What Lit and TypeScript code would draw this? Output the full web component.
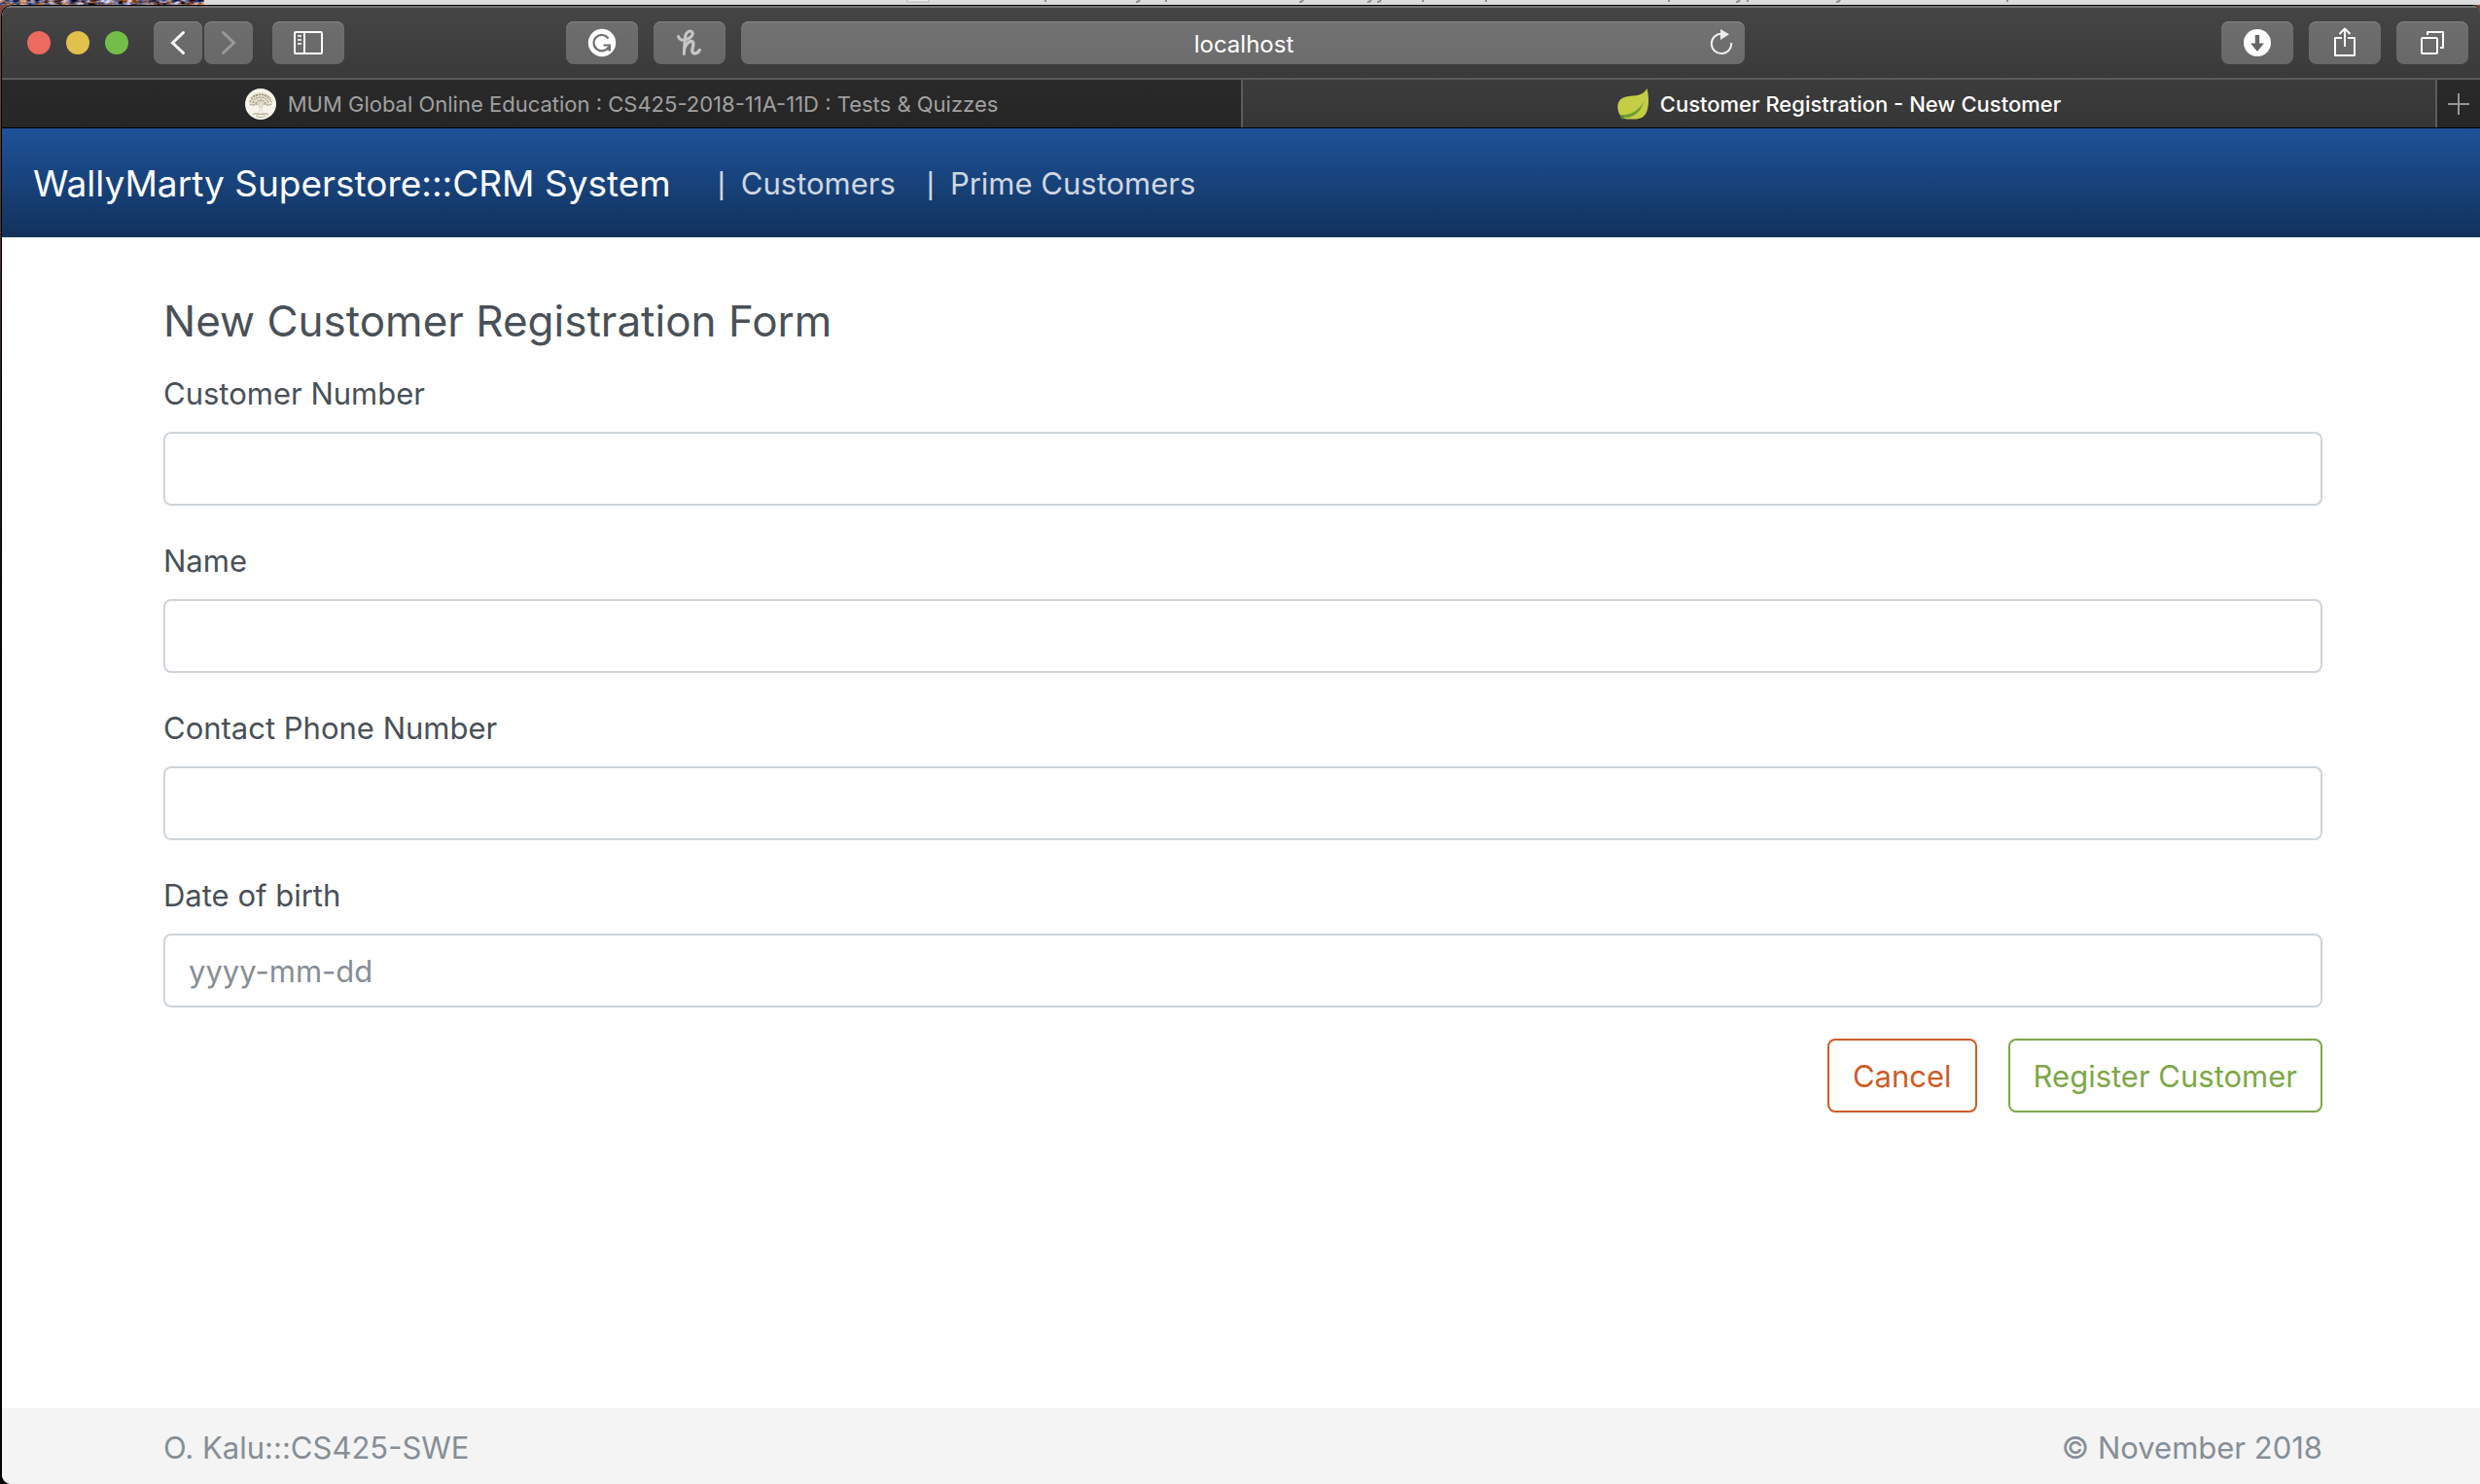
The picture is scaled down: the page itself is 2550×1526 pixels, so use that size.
import { LitElement, html, css, svg } from "lit";
import { customElement } from "lit/decorators.js";

interface Field {
  id: string;
  label: string;
  placeholder: string;
}

const FIELDS: Field[] = [
  { id: "customer-number", label: "Customer Number", placeholder: "" },
  { id: "name", label: "Name", placeholder: "" },
  { id: "phone", label: "Contact Phone Number", placeholder: "" },
  { id: "dob", label: "Date of birth", placeholder: "yyyy-mm-dd" },
];

/* Strip of the desktop that shows above the browser window. */
@customElement("desktop-strip")
export class DesktopStrip extends LitElement {
  static styles = css`
    :host {
      display: flex;
      height: 5px;
      overflow: hidden;
      background: linear-gradient(#dedede, #d6d6d6);
    }
    svg {
      display: block;
      flex: none;
    }
    .marks {
      margin-left: 720px;
    }
  `;

  render() {
    const tails = [144, 268, 532, 597, 785, 866, 1133];
    const hooks = [238, 406, 476, 486, 855, 958];
    return html`
      <svg width="210" height="5" aria-hidden="true">
        <filter id="grain" x="0" y="0" width="100%" height="100%" color-interpolation-filters="sRGB">
          <feTurbulence type="fractalNoise" baseFrequency="0.14 0.3" numOctaves="3" seed="4" />
          <feColorMatrix
            values="1.8 0 0 0 -0.42  1.3 0.7 0 0 -0.6  0.8 1.6 0 0 -0.76  0 0 0 0 1"
          />
        </filter>
        <rect width="210" height="5" filter="url(#grain)" />
      </svg>
      <svg class="marks" width="1200" height="5" aria-hidden="true">
        <path d="M3 0v2h22V0" fill="#eee" stroke="#b5b5b5" />
        ${tails.map((x) => svg`<rect x=${x} y="0" width="2" height="2" fill="#8c8c8c" />`)}
        ${hooks.map((x) => svg`<path d="M${x} 2q3 0 4-2" fill="none" stroke="#8c8c8c" stroke-width="2" />`)}
      </svg>
    `;
  }
}

@customElement("browser-toolbar")
export class BrowserToolbar extends LitElement {
  static styles = css`
    :host {
      display: grid;
      grid-template-columns: 1fr minmax(0, 1032px) 1fr;
      align-items: center;
      height: 76px;
      padding-left: 4px;
      border-top: 2px solid #737373;
      border-bottom: 2px solid #5a5a5a;
      background: linear-gradient(#454545, #3a3a3a);
    }
    .left,
    .right {
      display: flex;
      align-items: center;
    }
    .left {
      padding: 0 16px 0 22px;
    }
    .right {
      justify-content: flex-end;
      gap: 16px;
      padding-right: 12px;
    }
    .lights {
      display: flex;
      gap: 16px;
      margin-right: 26px;
    }
    .light {
      width: 24px;
      height: 24px;
      padding: 0;
      border: 0;
      border-radius: 50%;
    }
    .close {
      background: #ed6a5e;
    }
    .minimise {
      background: #e1c04c;
    }
    .zoom {
      background: #72be47;
    }
    .history {
      display: flex;
      gap: 2px;
      margin-right: 20px;
    }
    .extensions {
      display: flex;
      gap: 16px;
      margin-left: auto;
    }
    .tool {
      display: grid;
      place-items: center;
      width: 74px;
      height: 44px;
      padding: 0;
      border: 0;
      border-radius: 8px;
      color: #fff;
      background: linear-gradient(#6e6e6e, #686868);
      box-shadow: inset 0 1px 0 #868686;
    }
    .narrow {
      width: 50px;
    }
    .address {
      display: grid;
      grid-template-columns: 1fr auto;
      align-items: center;
      height: 44px;
      border-radius: 8px;
      background: linear-gradient(#727272, #6c6c6c);
      box-shadow: inset 0 1px 0 #8a8a8a;
    }
    .url {
      min-width: 0;
      height: 44px;
      margin-left: 48px;
      padding: 2px 0 0 2px;
      border: 0;
      outline: 0;
      background: none;
      color: #fff;
      font: 24px "Inter", "Liberation Sans", sans-serif;
      text-align: center;
      box-sizing: border-box;
    }
    .reload {
      display: grid;
      place-items: center;
      width: 48px;
      height: 44px;
      padding: 0;
      border: 0;
      background: none;
    }
    svg {
      display: block;
    }
  `;

  render() {
    return html`
      <div class="left">
        <div class="lights">
          <button class="light close" aria-label="Close"></button>
          <button class="light minimise" aria-label="Minimise"></button>
          <button class="light zoom" aria-label="Zoom"></button>
        </div>
        <div class="history">
          <button class="tool narrow" aria-label="Back">
            <svg width="50" height="44" fill="none" stroke="#fff" stroke-width="3" stroke-linecap="round">
              <path d="M30.500 11.500L19.500 22L30.500 32.500" />
            </svg>
          </button>
          <button class="tool narrow" aria-label="Forward">
            <svg width="50" height="44" fill="none" stroke="#999" stroke-width="3" stroke-linecap="round">
              <path d="M19.500 11.500L30.500 22L19.500 32.500" />
            </svg>
          </button>
        </div>
        <button class="tool" aria-label="Show sidebar">
          <svg width="74" height="44" fill="none" stroke="#fff" stroke-width="2">
            <rect x="23" y="11" width="28" height="22" rx="1" />
            <path d="M33 11v22" />
            <path d="M26 15h4M26 19h4M26 23h4" stroke="#ddd" />
          </svg>
        </button>
        <div class="extensions">
          <button class="tool" aria-label="Grammar checker">
            <svg width="74" height="44" fill="none">
              <circle cx="37" cy="22" r="14.200" fill="#fff" />
              <path d="M43.500 17.500A8.200 8.200 0 1 0 44 26" stroke="#707070" stroke-width="2.200" />
              <path d="M38.500 24.500h6.300v6" stroke="#707070" stroke-width="2.200" />
              <path d="M45.500 24.500l-5 5h5z" fill="#707070" />
            </svg>
          </button>
          <button class="tool" aria-label="Coupons">
            <svg width="74" height="44" fill="none" stroke="#c6c6c6" stroke-linecap="round" stroke-linejoin="round">
              <path
                d="M25.500 15.500C26 18.500 29 19.800 32.500 19C37.500 17.800 41 14.500 40 11.500C39 9 34.500 9.500 33 14C31.800 18 32 26 31.300 33.500"
                stroke-width="3"
              />
              <path
                d="M32 27C33.500 22.500 37 20 39.300 20.500C43 21.500 39.500 27 39.800 30.500C40 33.800 45 34 47.300 29.500"
                stroke-width="3.400"
              />
            </svg>
          </button>
        </div>
      </div>
      <div class="address">
        <input class="url" type="text" aria-label="Address" .value=${"localhost"} />
        <button class="reload" aria-label="Reload">
          <svg width="48" height="44" fill="none">
            <path d="M24 12.700A10.200 10.200 0 1 0 34.200 22" stroke="#eee" stroke-width="2" />
            <path d="M23 8l9 5.200l-9 5.800z" fill="#eee" />
          </svg>
        </button>
      </div>
      <div class="right">
        <button class="tool" aria-label="Downloads">
          <svg width="74" height="44">
            <circle cx="37" cy="22" r="14" fill="#fff" />
            <path d="M34.800 14h4.400v8.500h4.800L37 31l-7-8.500h4.800z" fill="#666" />
          </svg>
        </button>
        <button class="tool" aria-label="Share">
          <svg width="74" height="44" fill="none" stroke="#fff" stroke-width="2" stroke-linejoin="round">
            <path d="M34 17h-7v18h20v-18h-7" />
            <path d="M37 26V8M31.500 13L37 7.500L42.500 13" />
          </svg>
        </button>
        <button class="tool" aria-label="Show all tabs">
          <svg width="74" height="44" fill="none" stroke="#fff" stroke-width="2" stroke-linejoin="round">
            <rect x="26" y="17" width="16" height="16" rx="1" />
            <path d="M32 14v-3h16v16h-3" />
          </svg>
        </button>
      </div>
    `;
  }
}

@customElement("browser-tabs")
export class BrowserTabs extends LitElement {
  static styles = css`
    :host {
      display: grid;
      grid-template-columns: 1274fr 1228fr 46px;
      height: 50px;
      border-bottom: 1px solid #000;
      font: 22px "Inter", "Liberation Sans", sans-serif;
    }
    .tab {
      display: flex;
      align-items: center;
      justify-content: center;
      gap: 12px;
      min-width: 0;
      padding: 0;
      border: 0;
      font: inherit;
      color: #a0a0a0;
      background: linear-gradient(#2a2a2a, #252525);
      white-space: nowrap;
    }
    .active {
      border-left: 2px solid #5c5c5c;
      color: #fff;
      font-weight: 500;
      background: linear-gradient(#3c3c3c, #363636);
    }
    .add {
      border-left: 2px solid #5c5c5c;
    }
    svg {
      display: block;
      flex: none;
    }
  `;

  render() {
    return html`
      <button class="tab">
        <svg width="32" height="32" viewBox="0 0 32 32" fill="none">
          <circle cx="16" cy="16" r="16" fill="#f7f4ec" />
          <path
            d="M4 15C3 11 6 9 8 7C11 3 21 3 24 7C27 9 29 11 28 15C27 18 22 18 19 17L16 14L13 17C10 18 5 18 4 15Z"
            fill="#e4dfce"
          />
          <g stroke="#8f866c" stroke-dasharray="2 1">
            <path d="M5 14c2-4 6-7 11-8c5 1 9 4 11 8M8 15c1-4 4-6 8-6s7 2 8 6M11 16c1-3 2-4 5-4s4 1 5 4" />
            <path d="M6 10c3-5 17-5 20 0M5 16c2 2 6 1 8-1M27 16c-2 2-6 1-8-1" />
          </g>
          <path d="M15 12v12l-3 2h8l-3-2V12l1 5l4-3l-5 5h-2l-5-5l4 3z" fill="#fff" stroke="#b9af94" stroke-width="0.500" />
          <path d="M8 27c3-3 5 1 8-1c3 2 5-2 8 1M11 28c3 2 7 2 10 0" stroke="#aaa187" />
        </svg>
        <span>MUM Global Online Education : CS425-2018-11A-11D : Tests &amp; Quizzes</span>
      </button>
      <button class="tab active">
        <svg width="32" height="32" viewBox="0 0 32 32">
          <path
            d="M30.500 0C32 5 33 16 30.500 23C28 30 23 32 15 31.500C8 32 5 31 2 26C-1 20 0 12 6 9.500C13 6 25 10 30.500 0Z"
            fill="#c3ce45"
          />
          <path d="M3 27C12 28 21 24 27 14C24 26 14 31 5 30Z" fill="#6f9d33" />
          <path d="M4 31C3 29 3.500 27.500 5 27C6.500 28 7 30 6.500 31.500Z" fill="#4f8a36" />
        </svg>
        <span>Customer Registration - New Customer</span>
      </button>
      <button class="tab add" aria-label="New tab">
        <svg width="24" height="24" stroke="#969696" stroke-width="2">
          <path d="M12 1v22M1 12h22" />
        </svg>
      </button>
    `;
  }
}

@customElement("app-root")
export class AppRoot extends LitElement {
  static styles = css`
    :host {
      display: flex;
      flex-direction: column;
      min-height: 100vh;
      background: linear-gradient(#7a4a40, #2a1c22 30%, #050608 45%);
      font: 31px/48px "Inter", "Liberation Sans", sans-serif;
      color: #495057;
    }
    *,
    *::before {
      box-sizing: border-box;
    }
    .window {
      display: flex;
      flex-direction: column;
      flex: 1;
      margin-left: 1px;
      border: 0 solid #000;
      border-width: 1px 0 0 1px;
      border-radius: 12px 8px 0 10px;
      overflow: hidden;
      background: #fff;
    }
    .navbar {
      display: flex;
      align-items: center;
      min-height: 112px;
      padding: 2px 32px 0;
      background: linear-gradient(#1e5299, #11325c);
    }
    .brand {
      margin-right: 48px;
      color: #fff;
      font-size: 37px;
    }
    .links {
      display: flex;
      gap: 32px;
      margin: 0;
      padding: 0;
      list-style: none;
      color: #d0d7e0;
    }
    .links li {
      display: flex;
      gap: 16px;
    }
    .bar {
      font-family: "Liberation Sans", sans-serif;
    }
    a {
      color: inherit;
      text-decoration: none;
    }
    .page {
      flex: 1;
      padding: 56px 0 32px 4px;
    }
    .container {
      max-width: 2280px;
      margin: 0 auto;
      padding: 0 30px;
    }
    h1 {
      margin: 0 0 20px;
      font-size: 44px;
      line-height: 60px;
      font-weight: 400;
    }
    .field {
      display: flex;
      flex-direction: column;
      gap: 14px;
      margin-bottom: 32px;
      line-height: 50px;
    }
    .control {
      width: 100%;
      height: 76px;
      padding: 12px 24px;
      border: 2px solid #ced4da;
      border-radius: 8px;
      outline: 0;
      background: #fff;
      color: #495057;
      font: inherit;
    }
    .control::placeholder {
      color: #868e96;
      opacity: 1;
    }
    .actions {
      display: flex;
      justify-content: flex-end;
      gap: 32px;
    }
    .action {
      height: 76px;
      padding: 2px 24px 0;
      border: 2px solid currentColor;
      border-radius: 8px;
      background: #fff;
      font: inherit;
    }
    .cancel {
      color: #cd5c28;
    }
    .register {
      color: #7ea749;
    }
    footer {
      padding: 17px 0 13px 4px;
      background: #f4f4f4;
      color: #868e96;
    }
    .credits {
      display: flex;
      justify-content: space-between;
    }
  `;

  render() {
    return html`
      <desktop-strip></desktop-strip>
      <div class="window">
        <browser-toolbar></browser-toolbar>
        <browser-tabs></browser-tabs>
        <nav class="navbar">
          <a class="brand" href="#">WallyMarty Superstore:::CRM System</a>
          <ul class="links">
            <li><span class="bar">|</span><a href="#customers">Customers</a></li>
            <li><span class="bar">|</span><a href="#prime">Prime Customers</a></li>
          </ul>
        </nav>
        <main class="page">
          <form class="container" @submit=${(e: Event) => e.preventDefault()}>
            <h1>New Customer Registration Form</h1>
            ${FIELDS.map(
              (f) => html`
                <div class="field">
                  <label for=${f.id}>${f.label}</label>
                  <input class="control" type="text" id=${f.id} name=${f.id} placeholder=${f.placeholder} />
                </div>
              `
            )}
            <div class="actions">
              <button class="action cancel" type="button">Cancel</button>
              <button class="action register" type="submit">Register Customer</button>
            </div>
          </form>
        </main>
        <footer>
          <div class="container credits">
            <span>O. Kalu:::CS425-SWE</span>
            <span>© November 2018</span>
          </div>
        </footer>
      </div>
    `;
  }
}
